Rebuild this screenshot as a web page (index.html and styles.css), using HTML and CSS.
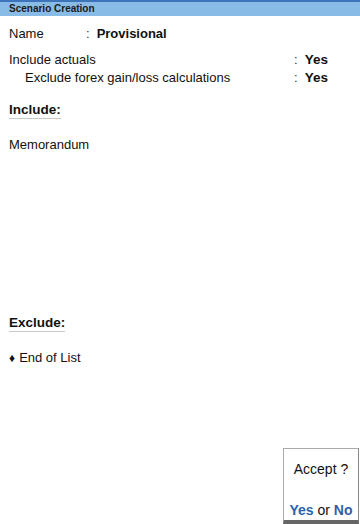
FILE: index.html
```html
<!DOCTYPE html>
<html>
<head>
<meta charset="utf-8">
<link rel="stylesheet" href="styles.css">
</head>
<body>
<div class="page">
  <div class="titlebar">Scenario Creation</div>
  <div class="content">
    <div class="row name-row">
      <span class="label name-label">Name</span>
      <span class="colon">:</span>
      <span class="value bold">Provisional</span>
    </div>
    <div class="row flag-row first-flag">
      <span class="label flag-label">Include actuals</span>
      <span class="colon">:</span>
      <span class="value bold">Yes</span>
    </div>
    <div class="row flag-row">
      <span class="label flag-label indent">Exclude forex gain/loss calculations</span>
      <span class="colon">:</span>
      <span class="value bold">Yes</span>
    </div>
    <div class="section include">
      <div class="heading">Include:</div>
      <div class="item item-inc">Memorandum</div>
    </div>
    <div class="section exclude">
      <div class="heading">Exclude:</div>
      <div class="item item-exc"><span class="diamond">&#9830;</span>End of List</div>
    </div>
  </div>
  <div class="accept">
    <div class="accept-q">Accept ?</div>
    <div class="accept-a"><span class="opt">Yes</span> or <span class="opt">No</span></div>
  </div>
</div>
</body>
</html>
```

FILE: styles.css
```css
html, body {
  margin: 0;
  padding: 0;
}
body {
  width: 360px;
  height: 524px;
  overflow: hidden;
  background: #ffffff;
  font-family: "Liberation Sans", Arial, sans-serif;
  color: #111111;
}
.page {
  position: relative;
  width: 360px;
  height: 524px;
}
.titlebar {
  height: 14px;
  border-top: 2px solid #3d73b9;
  background: #88bbe6;
  font-size: 10px;
  font-weight: bold;
  line-height: 14px;
  padding-left: 9px;
  color: #1a1a1a;
}
.content {
  padding: 0 0 0 9px;
  font-size: 13px;
}
.row {
  display: flex;
  align-items: baseline;
}
.name-row {
  margin-top: 10px;
  height: 17px;
}
.name-label {
  width: 77px;
}
.name-row .value {
  font-size: 13px;
  margin-left: 7px;
}
.first-flag {
  margin-top: 9px;
}
.flag-row {
  height: 18px;
}
.flag-label {
  width: 285px;
}
.indent {
  padding-left: 16px;
  width: 269px;
}
.flag-row .value {
  margin-left: 7px;
  font-size: 13.5px;
}
.colon {
  color: #333;
}
.bold {
  font-weight: bold;
}
.heading {
  display: inline-block;
  font-weight: bold;
  font-size: 13.5px;
  border-bottom: 1px solid #c8c8c8;
  padding-bottom: 1px;
}
.include {
  margin-top: 14px;
  height: 213px;
}
.item-inc {
  margin-top: 18px;
}
.item-exc {
  margin-top: 18px;
}
.diamond {
  font-size: 12px;
  margin-right: 4px;
}
.accept {
  position: absolute;
  left: 283px;
  top: 448px;
  width: 76px;
  height: 76px;
  border: 1px solid #aaaaaa;
  border-bottom: 4px solid #666666;
  border-right: 1px solid #888;
  background: #ffffff;
  box-sizing: border-box;
  text-align: center;
  font-size: 14px;
}
.accept-q {
  margin-top: 12px;
}
.accept-a {
  margin-top: 25px;
}
.opt {
  color: #2e62a7;
  font-weight: bold;
}
```
